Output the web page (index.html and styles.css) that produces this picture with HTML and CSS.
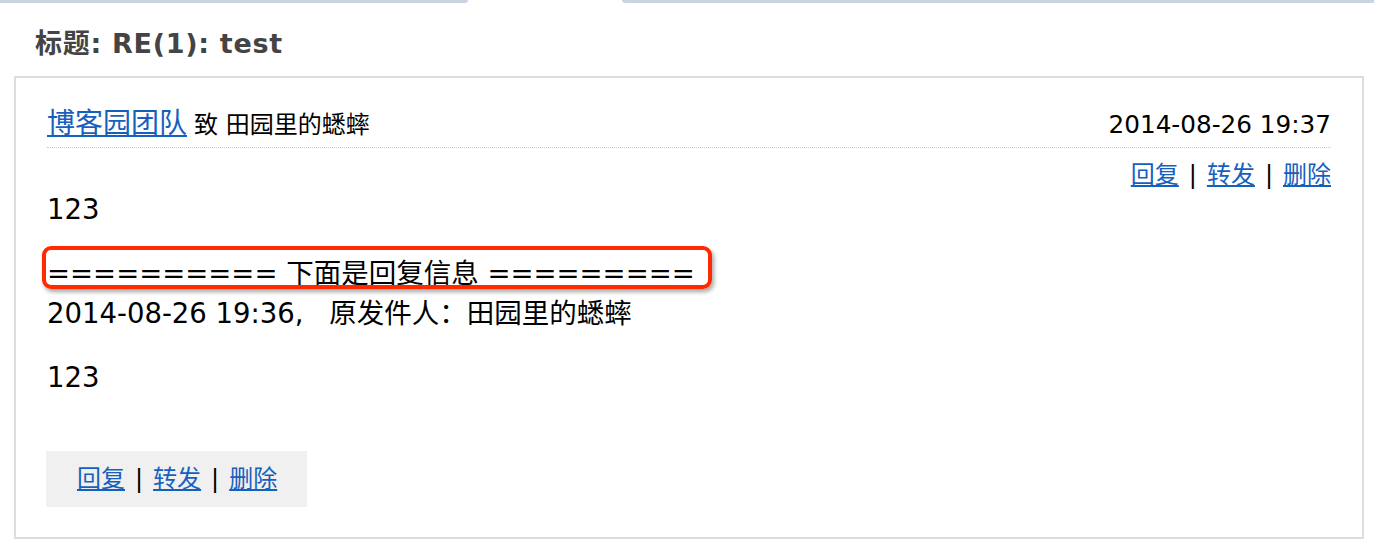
FILE: index.html
```html
<!DOCTYPE html>
<html lang="zh-CN">
<head>
<meta charset="utf-8">
<title>RE(1): test</title>
<link rel="stylesheet" href="styles.css">
</head>
<body>
<div class="tabbar"><span class="tab-left"></span><span class="tab-gap"></span><span class="tab-right"></span></div>
<h1 class="title">标题: RE(1): test</h1>
<div class="msgbox">
  <div class="msg-head">
    <div class="from"><a href="#" class="sender">博客园团队</a> <span class="to">致 田园里的蟋蟀</span></div>
    <div class="date">2014-08-26 19:37</div>
  </div>
  <div class="actions"><a href="#">回复</a><span class="sep">|</span><a href="#">转发</a><span class="sep">|</span><a href="#">删除</a></div>
  <div class="content">
    <p>123</p>
    <p><span class="hl">========== 下面是回复信息 =========</span><br>2014-08-26 19:36, <span class="orig">原发件人：田园里的蟋蟀</span></p>
    <p>123</p>
  </div>
  <div class="bottom-actions"><a href="#">回复</a><span class="sep">|</span><a href="#">转发</a><span class="sep">|</span><a href="#">删除</a></div>
</div>
</body>
</html>
```
FILE: styles.css
```css
html, body {
  margin: 0;
  padding: 0;
  background: #fff;
}
body {
  font-family: "DejaVu Sans", "Noto Sans CJK SC", sans-serif;
  color: #000;
}
a {
  color: #1560bd;
  text-decoration: underline;
}
.tabbar {
  display: flex;
  height: 3px;
}
.tab-left {
  width: 468px;
  background: #c9d4e3;
  border-radius: 0 0 3px 0;
}
.tab-gap {
  width: 154px;
}
.tab-right {
  flex: 1;
  background: #c9d4e3;
  border-radius: 0 0 0 3px;
}
.title {
  margin: 21px 0 12px 35px;
  font-size: 27px;
  letter-spacing: 0.7px;
  line-height: 40px;
  font-weight: bold;
  color: #444;
}
.msgbox {
  margin: 0 10px 0 14px;
  border: 2px solid #dddddd;
  padding: 27px 31px 30px 31px;
}
.msg-head {
  display: flex;
  justify-content: space-between;
  align-items: baseline;
  border-bottom: 1px dotted #c8c8c8;
  line-height: 38px;
}
.sender {
  font-size: 28px;
}
.to {
  font-size: 24px;
  margin-left: 2px;
}
.date {
  font-size: 24.7px;
}
.actions {
  margin-top: 13px;
  text-align: right;
  font-size: 24px;
  line-height: 28px;
}
.sep {
  margin: 0 10px;
}
.content {
  font-size: 27.5px;
  line-height: 40px;
}
.content p {
  margin: 0 0 24px 0;
}
.orig {
  margin-left: 17px;
}
.hl {
  display: inline-block;
  position: relative;
}
.hl::after {
  content: "";
  position: absolute;
  left: -5px;
  top: -7px;
  width: 670px;
  height: 43px;
  box-sizing: border-box;
  border: 4px solid #ff2a00;
  border-radius: 9px;
  box-shadow: 2px 3px 4px rgba(0, 0, 0, 0.35);
}
.bottom-actions {
  display: inline-block;
  margin: 30px 0 0 -1px;
  background: #f0f0f0;
  font-size: 24px;
  line-height: 56px;
  padding: 0 30px 0 31px;
}
```
